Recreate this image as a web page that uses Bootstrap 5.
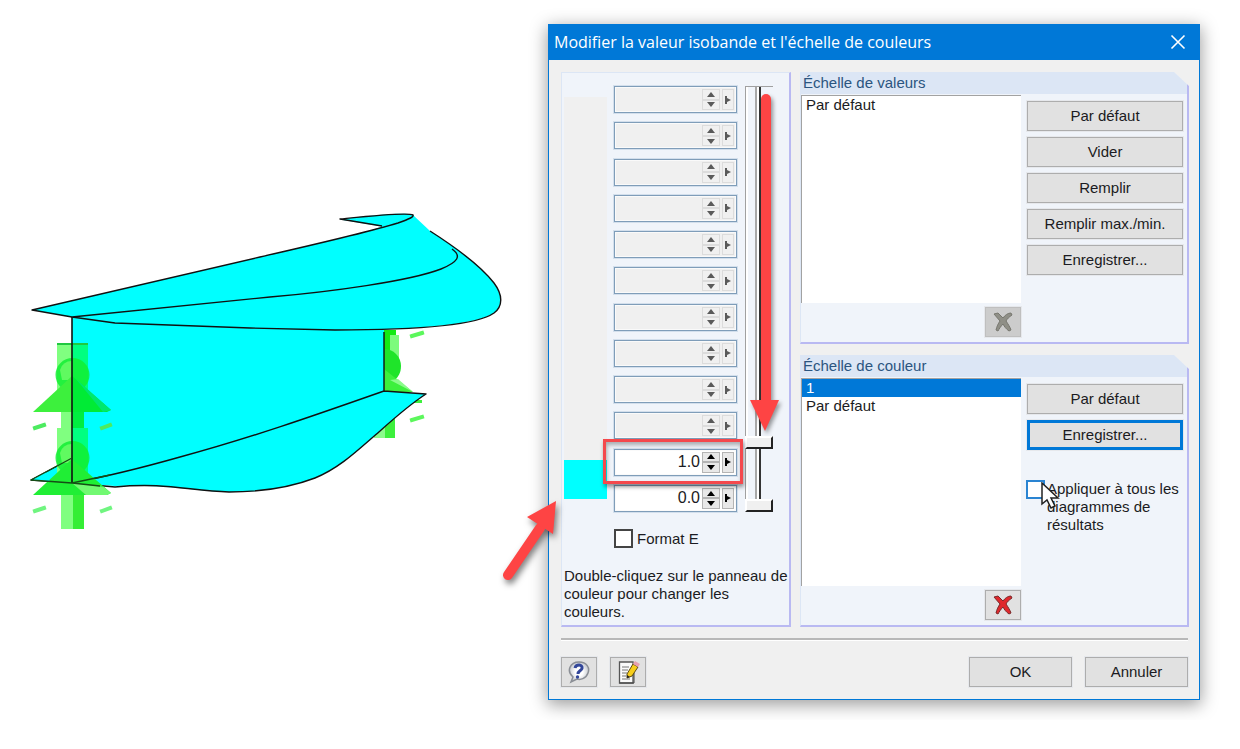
<!DOCTYPE html>
<html lang="fr">
<head>
<meta charset="utf-8">
<meta name="viewport" content="width=device-width, initial-scale=1">
<title>Modifier la valeur isobande et l'échelle de couleurs</title>
<link rel="stylesheet" href="https://cdn.jsdelivr.net/npm/bootstrap@5.3.0/dist/css/bootstrap.min.css">
<style>
  body { font-family: "Liberation Sans", Arial, sans-serif; font-size: 15px; line-height: 18px; color: #1b1b22; background: #fff; }
  .stage { display: grid; grid-template-columns: minmax(0, 548fr) minmax(0, 652fr); align-items: start; padding: 0 40px 20px 0; }
  .model { display: block; width: 100%; height: auto; }
  .dlg { position: relative; margin-top: 24px; background: #f0f0f0; border: 1px solid #0078d7; box-shadow: 0 4px 16px 1px rgba(0,0,0,.38); }
  .dlg-title { background: #0078d7; color: #fff; font-family: "Open Sans", sans-serif; height: 36px; padding: 0 14px 0 6px; margin: -1px -1px 0; }
  .dlg-title h1 { font-size: 16px; line-height: 18px; font-weight: 400; }
  .plain-btn { background: none; border: 0; padding: 0; line-height: 0; }
  .dlg-body { padding: 12px 10px 12px 12px; }
  .cols { display: grid; grid-template-columns: minmax(0, 230fr) minmax(0, 389fr); gap: 9px; }
  .panel-l { background: #f0f4fa; border: 1px solid #dce6f5; border-right: 2px solid #b9b9f2; border-bottom: 2px solid #b9b9f2; padding: 13px 2px 4px; }
  .scale { display: grid; grid-template-columns: 43px minmax(0, 1fr) 28px; height: 426px; margin-right: 14px; }
  .swatches { background: #f0f0f0; margin: 11px 0 13px; padding-top: 363px; }
  .swatch { display: block; width: 100%; height: 39px; background: #00ffff; border: 0; padding: 0; }
  .vals { margin: 0 8px 0 7px; }
  .spin { height: 27px; border: 1px solid #7f9db9; background: #f0f0f0; padding: 2px; box-shadow: inset 0 0 0 1px #fafafa, 0 0 0 1px #d3dfec; }
  .spin input { flex: 1 1 0; width: 0; min-width: 0; border: 0; padding: 0 2px; background: transparent; text-align: right; font-size: 16px; line-height: 18px; color: #1b1b22; outline: 0; }
  .spin.on { background: #fff; }
  .arrows { width: 18px; }
  .arrows button, .go { flex: 1; border: 1px solid #dcdcdc; background: #f0f0f0; padding: 0; line-height: 0; display: flex; align-items: center; justify-content: center; color: #5a5a5a; }
  .go { flex: 0 0 12px; margin-left: 2px; }
  .on .arrows button, .on .go { border-color: #b4b4b4; background: #e8e8e8; color: #000; }
  .mark-box { position: absolute; inset: -11px -7px -9px -12px; border: 3px solid #f4484c; box-shadow: 1px 3px 4px rgba(0,0,0,.4), inset 1px 3px 4px rgba(0,0,0,.3); pointer-events: none; z-index: 1; }
  .rail { position: relative; border-top: 1px solid #a0a0a0; border-left: 1px solid #a0a0a0; background: linear-gradient(90deg, #fff 0 2px, transparent 2px 9px, #a8a8a8 9px 11px, #fff 11px 13px, #333 13px 15px, transparent 15px); }
  .rail input { position: absolute; top: -1px; left: -1px; width: 426px; height: 28px; margin: 0; background: none; appearance: none; -webkit-appearance: none; transform-origin: 0 0; transform: rotate(90deg) translateY(-28px); pointer-events: none; }
  .rail input::-webkit-slider-thumb { -webkit-appearance: none; width: 13px; height: 28px; border-radius: 0; background: #f0f0f0; border: 2px solid #fff; border-top-color: #222; border-right-color: #222; pointer-events: auto; }
  .long-arrow { position: absolute; top: 1px; left: 0; width: 38px; height: 352px; filter: drop-shadow(2px 3px 2px rgba(0,0,0,.4)); pointer-events: none; overflow: visible; }
  .short-arrow { position: absolute; left: -52px; top: 468px; width: 70px; height: 96px; filter: drop-shadow(2px 4px 3px rgba(0,0,0,.5)); pointer-events: none; }
  .tick { appearance: none; -webkit-appearance: none; flex: none; width: 19px; height: 19px; margin: 0; border: 2px solid #444; background: #fff; }
  .tick.hot { border-color: #2a84d2; }
  .fmt { margin: 17px 0 0 50px; gap: 4px; }
  .hint { margin: 19px 0 0; white-space: nowrap; }
  .group { background: #f0f4fa; clip-path: polygon(0 0, calc(100% - 15px) 0, 100% 14px, 100% 100%, 0 100%); border-right: 2px solid #b9b9f2; border-bottom: 2px solid #b9b9f2; border-left: 1px solid #dce6f5; }
  .group h2 { background: #dce6f5; color: #2b5580; font-size: 15px; line-height: 18px; padding: 2px 2px; margin: 0; height: 22px; }
  .group-in { display: grid; grid-template-columns: minmax(0, 1fr) 156px; column-gap: 6px; padding: 1px 4px 5px 0; }
  .lst { height: 208px; background: #fff; border-top: 1px solid #a2a2a2; border-left: 1px solid #a2a2a2; list-style: none; margin: 0; padding: 0; }
  .lst li { padding: 0 4px; }
  .lst li.sel { background: #0078d7; color: #fff; }
  .wbtn { height: 30px; background: #e1e1e1; border: 1px solid #adadad; border-radius: 0; padding: 0; font-size: 15px; line-height: 18px; color: #1b1b22; display: flex; align-items: center; justify-content: center; box-shadow: 0 0 0 1px #e6e8ec; }
  .wbtn.focus-on { border: 3px solid #0078d7; }
  .wbtn.sq { width: 36px; }
  .wbtn.sq:disabled { background: #ccc; border-color: #bfbfbf; opacity: 1; }
  .wbtn.wide { width: 103px; }
  .stack { padding-top: 6px; gap: 6px; }
  .apply { margin: 24px -4px 0 -1px; gap: 2px; white-space: nowrap; position: relative; }
  .pointer { position: absolute; left: 15px; top: 2px; }
  .foot { border-top: 2px solid #b8b8b8; box-shadow: inset 0 1px #fff; margin: 11px 1px 0 0; padding-top: 17px; gap: 13px; }
</style>
</head>
<body>
<svg width="0" height="0" class="position-absolute" aria-hidden="true">
  <symbol id="up" viewBox="0 0 8 5"><path d="M4 0 8 5H0z" fill="currentColor"/></symbol>
  <symbol id="down" viewBox="0 0 8 5"><path d="M0 0h8L4 5z" fill="currentColor"/></symbol>
  <symbol id="right" viewBox="0 0 6 8"><path d="M0 0h2v2l4 2-4 2v2H0z" fill="currentColor"/></symbol>
  <symbol id="cross" viewBox="0 0 20 20"><path d="M1 2 5 1 10 6C12 3 15 1 18 1L19 3C16 5 14 7 13 9C15 12 17 15 18 18L16 19C13 17 11 14 10 12C8 14 6 17 5 19L3 18C4 14 5 12 7 9z" stroke-width="1"/></symbol>
</svg>
<main class="stage">
  <svg class="model" viewBox="0 0 548 700" role="img" aria-label="Modèle déformé">
    <g stroke-linejoin="round">
      <g fill="#3df03d">
        <path d="M384 330h12v50h-12z" fill="#14ea14"/><path d="M390 335h9v35h-9z" fill="#7dfb7d"/>
        <path d="M384 349a17 17 0 0 1 17 17c0 7-3 11-6 14h-11z" fill="#1fe42a"/>
        <path d="M384 369 413 392H384z"/><path d="M390 380 398 379 413 392z" fill="#8bfb8b"/>
        <path d="M374 415h12v23h-12z" fill="#8bfb8b"/><path d="M385 410h10v28h-10z"/>
        <path d="M412 336 422 333M412 420 422 417" stroke="#5cf75c" stroke-width="4" stroke-linecap="square"/>
        <path d="M414 400h8v3h-8z"/>
      </g>
      <path d="M72 317 384 329V391L426 394C412 403 400 413 380 431C359 449 340 468 315 478C289 488 260 492 229 492C195 491 165 484 115 486L72 483 31 480 72 458z" fill="#0ff"/>
      <path d="M72 458 31 480 72 483 115 487C165 482 190 491 229 492C260 492 289 488 315 478C340 468 359 449 380 431C400 413 412 403 426 394L384 391C310 417 250 438 180 457Q120 474 72 483M384 391V332" fill="none" stroke="#111" stroke-width="1.4"/>
      <path d="M32 310 260 257C330 241 365 233 382 226.500L340 219.500C370 215 408 212 413 215L430 231C455 247 480 265 494 283C503 295 503 306 494 313C480 323 430 330 335 330L250 328 115 323 72 317z" fill="#0ff"/>
      <path d="M430 231C455 247 480 265 494 283C503 295 503 306 494 313C480 323 430 330 335 330L250 328 115 323 72 317 32 310 260 257C330 241 375 230 398 223 409 219 414 217 413 215 407 212 370 216 340 219L382 226M72 317 270 297C330 292 410 281 441 269C458 262 462 256 452 249" fill="none" stroke="#111" stroke-width="1.4"/>
      <g>
        <path d="M57 343h15v60H57z" fill="#80ff80"/><path d="M72 343h16v60H72z" fill="#00ff80"/>
        <path d="M57 344h31" stroke="#20c840" stroke-width="2"/>
        <circle cx="72.500" cy="375" r="17" fill="#12ef32" opacity=".85"/>
        <path d="M60 370a12 11 0 0 1 12-9v19H62z" fill="#60fa60"/>
        <path d="M72 376 33 412h39z" fill="#3df03d"/><path d="M72 376V412h35l4-2z" fill="#00eb35"/>
        <path d="m76 379 27 33 8-2z" fill="#00e76f"/>
        <path d="M61 412h11v16H61z" fill="#80ff80"/><path d="M72 412h12v16H72z" fill="#00ed40"/>
        <path d="M35 428 44 425M102 428 110 425" stroke="#4deb60" stroke-width="4" stroke-linecap="square"/>
      </g>
      <path d="M57 428h15v55H57z" fill="#80ff80"/><path d="M72 428h16v54H72z" fill="#00ff80"/>
      <circle cx="72.500" cy="458" r="17" fill="#12ef32" opacity=".85"/>
      <path d="M60 453a12 11 0 0 1 12-9v19H62z" fill="#60fa60"/>
      <path d="M72 459 33 495h74l4-2z" fill="#20ee35"/><path d="m72 483 32 4 7 6-4 2H86z" fill="#72f972"/>
      <path d="M61 495h12v34H61z" fill="#80ff80"/><path d="M73 495h11v34H73z" fill="#35ee35"/>
      <path d="M35 511 44 508M102 511 110 508" stroke="#70f580" stroke-width="4" stroke-linecap="square"/>
      <path d="M46 472 31 480 50 481.500z" fill="#0ff"/>
      <path d="M72 317V483" stroke="#111" stroke-width="1.600"/>
      <path d="M72 458 31 480 72 483 100 486M72 483 110 475" stroke="#154d15" stroke-width="1.300" fill="none"/>
    </g>
  </svg>

  <section class="dlg" role="dialog" aria-labelledby="t">
    <header class="dlg-title d-flex align-items-center justify-content-between">
      <h1 id="t" class="m-0 text-nowrap">Modifier la valeur isobande et l'échelle de couleurs</h1>
      <button class="plain-btn" type="button" aria-label="Fermer"><svg width="16" height="16" viewBox="0 0 16 16"><path d="M1.500 1.500 14.500 14.500M14.500 1.500 1.500 14.500" stroke="#fff" stroke-width="1.600"/></svg></button>
    </header>
    <div class="dlg-body">
      <div class="cols">
        <div class="panel-l">
          <div class="scale">
            <div class="swatches"><button class="swatch" type="button" aria-label="Couleur"></button></div>
            <div class="vals d-flex flex-column justify-content-between" id="vals"></div>
            <div class="rail">
              <input type="range" min="0" max="413" value="413" aria-label="Valeur minimale">
              <input type="range" min="0" max="413" value="350" aria-label="Valeur maximale">
              <svg class="long-arrow" viewBox="0 0 38 352"><path d="M20 11V318" stroke="#fe4444" stroke-width="10" stroke-linecap="round"/><path d="M4 312H33L19 343z" fill="#fe4444"/></svg>
            </div>
          </div>
          <div class="fmt d-flex align-items-center"><input class="tick" type="checkbox" id="fe"><label for="fe">Format E</label></div>
          <p class="hint">Double-cliquez sur le panneau de<br>couleur pour changer les<br>couleurs.</p>
        </div>
        <div class="d-flex flex-column justify-content-between">
          <section class="group">
            <h2>Échelle de valeurs</h2>
            <div class="group-in">
              <div class="d-flex flex-column">
                <ul class="lst"><li>Par défaut</li></ul>
                <button class="btn wbtn sq align-self-end mt-1" type="button" aria-label="Supprimer" disabled><svg width="20" height="20" fill="#8f8f87" stroke="#77776f"><use href="#cross"/></svg></button>
              </div>
              <div class="stack d-flex flex-column">
                <button class="btn wbtn" type="button">Par défaut</button>
                <button class="btn wbtn" type="button">Vider</button>
                <button class="btn wbtn" type="button">Remplir</button>
                <button class="btn wbtn" type="button">Remplir max./min.</button>
                <button class="btn wbtn" type="button">Enregistrer...</button>
              </div>
            </div>
          </section>
          <section class="group">
            <h2>Échelle de couleur</h2>
            <div class="group-in">
              <div class="d-flex flex-column">
                <ul class="lst"><li class="sel">1</li><li>Par défaut</li></ul>
                <button class="btn wbtn sq align-self-end mt-1" type="button" aria-label="Supprimer"><svg width="20" height="20" fill="#e0282c" stroke="#7a2a2a"><use href="#cross"/></svg></button>
              </div>
              <div class="stack d-flex flex-column">
                <button class="btn wbtn" type="button">Par défaut</button>
                <button class="btn wbtn focus-on" type="button">Enregistrer...</button>
                <div class="apply d-flex"><input class="tick hot" type="checkbox" id="ap"><label for="ap">Appliquer à tous les<br>diagrammes de<br>résultats</label>
                  <svg class="pointer" width="20" height="28" viewBox="0 0 20 28"><path d="M1 1V22L6 18 10 26 14 24 10 16H17z" fill="#fff" stroke="#222" stroke-width="1.500"/></svg></div>
              </div>
            </div>
          </section>
        </div>
      </div>
      <footer class="foot d-flex">
        <button class="btn wbtn sq" type="button" aria-label="Aide"><svg width="24" height="24" viewBox="0 0 24 24"><defs><radialGradient id="bub"><stop offset=".4" stop-color="#fff"/><stop offset="1" stop-color="#c9ccd2"/></radialGradient></defs><path d="M6 17C-1 11 3 2 12 2C20 2 23 8 21 13C19 19 13 20 10 19L4 22z" fill="url(#bub)" stroke="#8b8f96" stroke-width="1.500"/><path d="M8 8C9 4 16 4 15 8.500C14 11 11 11 11 14" fill="none" stroke="#33479a" stroke-width="3"/><circle cx="10.500" cy="17" r="1.700" fill="#33479a"/></svg></button>
        <button class="btn wbtn sq me-auto" type="button" aria-label="Modifier"><svg width="24" height="24" viewBox="0 0 24 24"><path d="M3.500 2H17V23H3.500z" fill="#fafafa" stroke="#555" stroke-width="1.300"/><path d="M6 7h7M6 10h6M6 13h5M6 16h4M6 19h8" stroke="#777" stroke-width="1.200"/><path d="M3.500 23H18V13" stroke="#444" fill="none"/><path d="M11 14 17 4 22 7 16 16 11 18z" fill="#f7ce1b" stroke="#5d4b12"/><path d="M17 4 19 1 24 4 22 7z" fill="#e7a0ae"/><path d="M11 18 11 15 14 17z" fill="#222"/></svg></button>
        <button class="btn wbtn wide" type="button">OK</button>
        <button class="btn wbtn wide" type="button">Annuler</button>
      </footer>
    </div>
    <svg class="short-arrow" viewBox="0 0 70 96"><path d="M11 82 43 35" stroke="#fe4444" stroke-width="10" stroke-linecap="round"/><path d="M59 8 56 41 30 24z" fill="#fe4444"/></svg>
  </section>
</main>
<script>
  // Twelve isoband values; only the last two are in use.
  const values = ['', '', '', '', '', '', '', '', '', '', '1.0', '0.0'];
  const icon = (id, w, h) => `<svg width="${w}" height="${h}"><use href="#${id}"/></svg>`;
  document.getElementById('vals').innerHTML = values.map((v, i) => {
    const off = v ? '' : 'disabled';
    return `<div class="spin d-flex position-relative ${v ? 'on' : ''}">
      <input type="text" aria-label="Valeur ${i + 1}" value="${v}" ${off}>
      <div class="arrows d-flex flex-column">
        <button type="button" aria-label="Augmenter" ${off}>${icon('up', 8, 5)}</button>
        <button type="button" aria-label="Diminuer" ${off}>${icon('down', 8, 5)}</button>
      </div>
      <button class="go" type="button" aria-label="Options" ${off}>${icon('right', 6, 8)}</button>
      ${v === '1.0' ? '<span class="mark-box"></span>' : ''}
    </div>`;
  }).join('');
</script>
<script src="https://cdn.jsdelivr.net/npm/bootstrap@5.3.0/dist/js/bootstrap.bundle.min.js"></script>
</body>
</html>
